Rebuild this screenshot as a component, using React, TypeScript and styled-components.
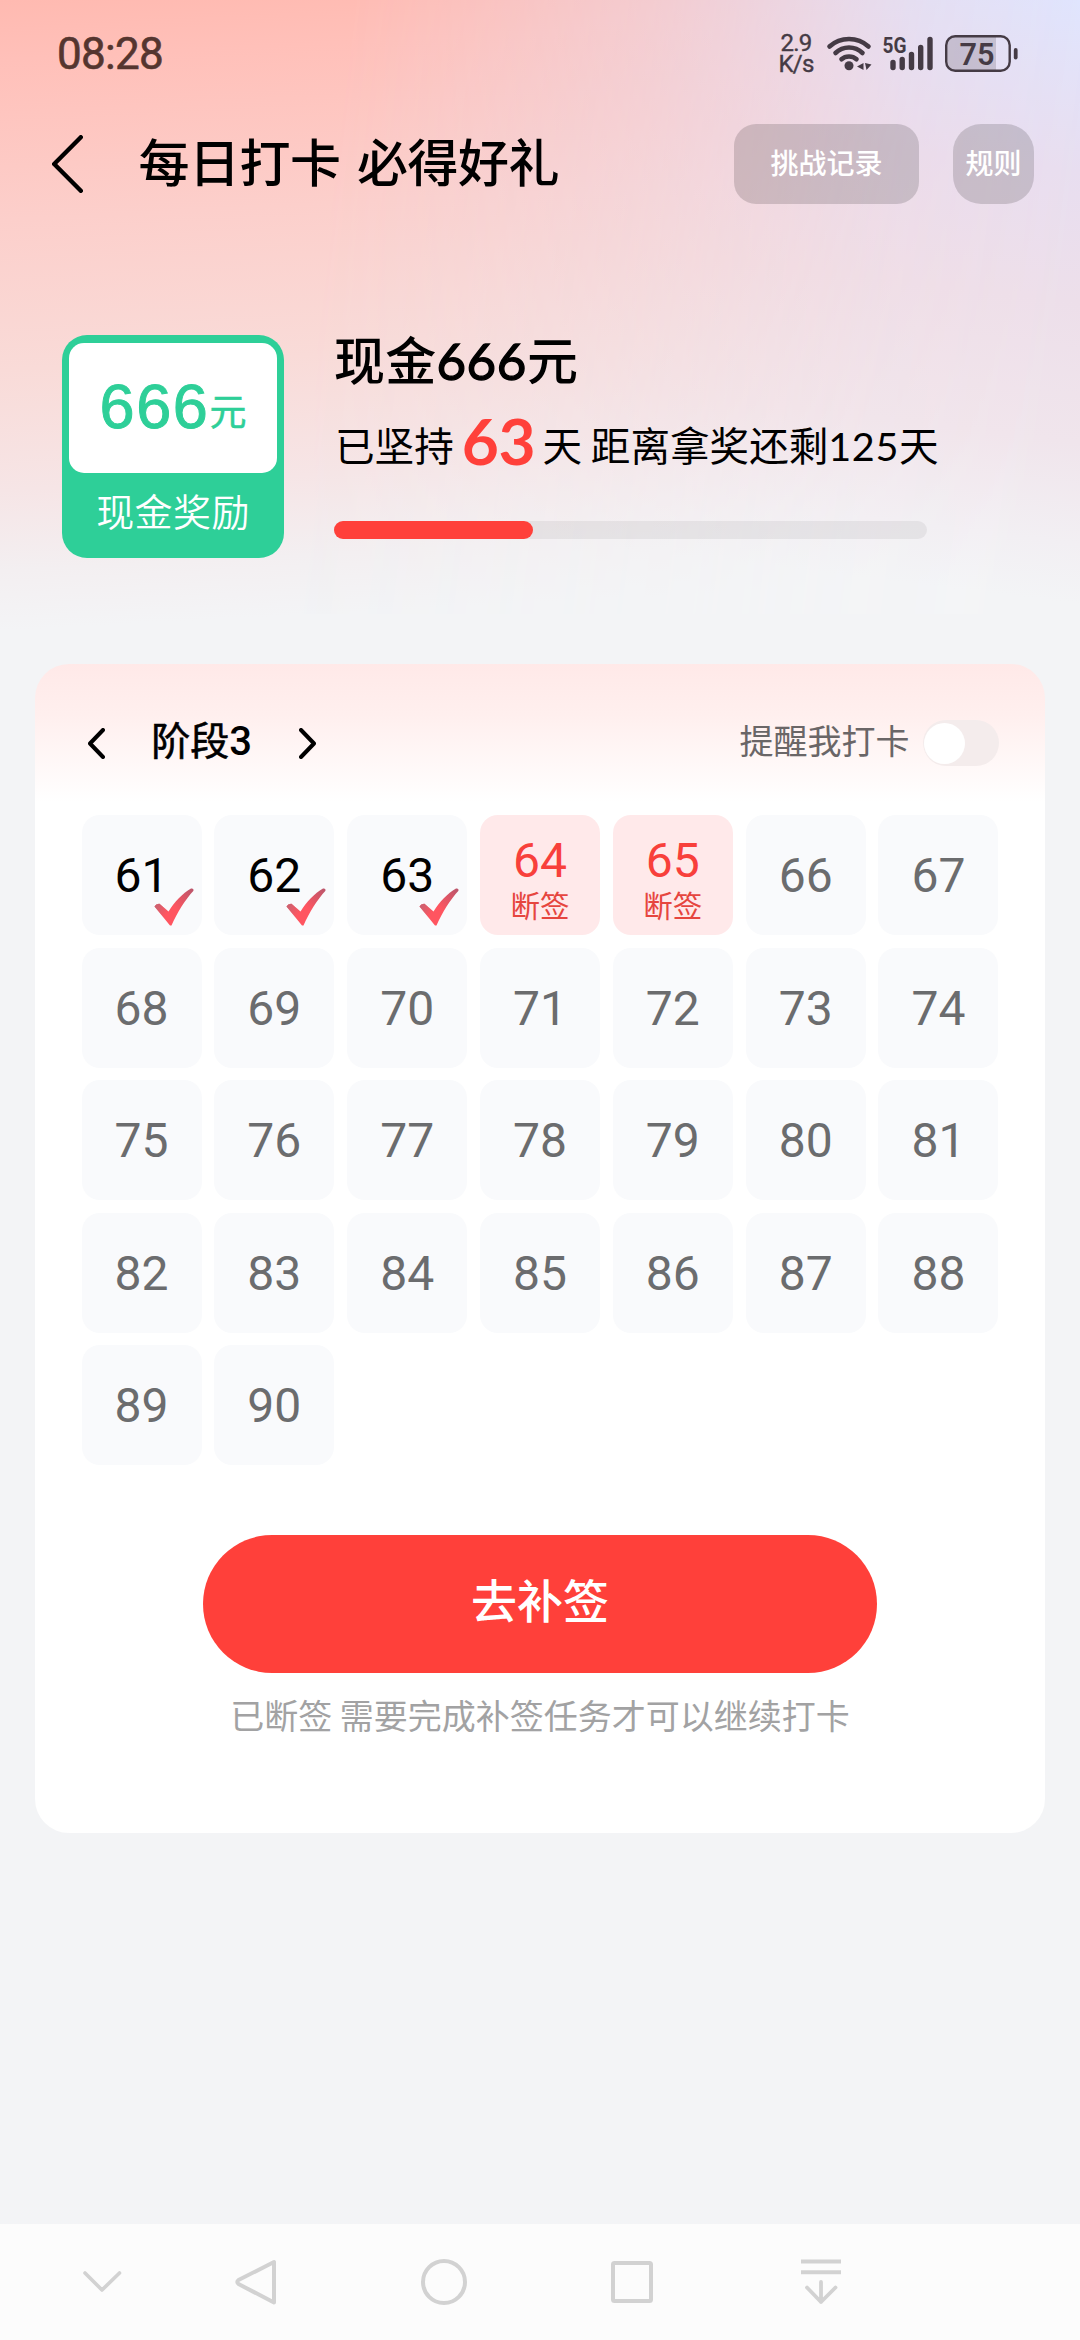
import React from "react";
import styled, { createGlobalStyle, css } from "styled-components";

const cjk = `"Noto Sans CJK SC", sans-serif`;
const red = "#ff403a";

const GlobalStyle = createGlobalStyle`
  * { box-sizing: border-box; }
  body { margin: 0; background: #f3f4f6; font-family: ${cjk}; color: #000; }
  button { border: 0; padding: 0; margin: 0; background: none; font-family: inherit; color: inherit; }
  svg { display: block; flex: none; }
`;

const Screen = styled.div`
  width: 1080px;
  height: 2340px;
  display: flex;
  flex-direction: column;
  background: #f3f4f6;
  overflow: hidden;
`;

const Hero = styled.header`
  position: relative;
  isolation: isolate;
  height: 664px;
  flex: none;
  display: flex;
  flex-direction: column;
  background: linear-gradient(177deg, #ffbab1 0, #ffc0b9 60px, #fccfcb 220px, #f9dbd8 370px, #f6e5e6 490px, #f3eff1 570px, #f3f4f6 630px);
  &::before {
    content: "";
    position: absolute;
    inset: 0 0 50px;
    z-index: -1;
    background: linear-gradient(187deg, #dfe5ff 0, #e8def0 170px, #eddfea 300px, #f0e5ec 440px, #f2eff3 540px, #f3f4f6 600px);
    mask-image: linear-gradient(97deg, transparent 30%, rgba(0, 0, 0, 0.4) 57%, rgba(0, 0, 0, 0.85) 80%, #000 96%);
  }
`;

const StatusBar = styled.div`
  height: 108px;
  flex: none;
  display: flex;
  align-items: center;
  padding: 0 62px 0 57px;
`;

const Clock = styled.span`
  flex: 1;
  font: 400 44px/52px Roboto, sans-serif;
  letter-spacing: -0.7px;
  color: #55352f;
  -webkit-text-stroke: 0.6px #55352f;
`;

const NetSpeed = styled.span`
  width: 36px;
  margin-right: 12px;
  text-align: center;
  font: 400 24px/21px Roboto, sans-serif;
  letter-spacing: -0.8px;
  color: #453b45;
  -webkit-text-stroke: 0.4px #453b45;
  white-space: pre-line;
`;

const NavRow = styled.div`
  height: 112px;
  flex: none;
  display: flex;
  align-items: center;
  padding: 0 46px 0 51.5px;
`;

const IconButton = styled.button`
  display: flex;
`;

const PageTitle = styled.h1`
  flex: 1;
  margin: -9px 0 0 56px;
  font-size: 51px;
  font-weight: 500;
  line-height: 60px;
  letter-spacing: -0.5px;
  word-spacing: 5.5px;
  white-space: nowrap;
`;

const Pill = styled.button<{ $w: number; $r: string }>`
  width: ${(p) => p.$w}px;
  height: 80px;
  border-radius: ${(p) => p.$r};
  background: rgba(0, 0, 0, 0.15);
  color: #fff;
  font-size: 28px;
  font-weight: 500;
  line-height: 76px;
  padding-bottom: 4px;
  & + & { margin-left: 34px; }
`;

const Summary = styled.section`
  display: flex;
  padding: 114.5px 0 0 62px;
`;

const Voucher = styled.div`
  width: 222px;
  height: 223px;
  border-radius: 25px;
  background: #2ecf98;
  padding: 8px 7px 0;
  text-align: center;
`;

const VoucherFace = styled.div`
  height: 130px;
  border-radius: 15px;
  background: #fff;
  color: #2ecf98;
  display: flex;
  justify-content: center;
  align-items: baseline;
  font: 400 63px/127px "Liberation Sans", sans-serif;
  letter-spacing: 1.7px;
  -webkit-text-stroke: 1px currentColor;
`;

const Unit = styled.span`
  font: 400 37px/60px ${cjk};
  letter-spacing: 0;
  -webkit-text-stroke: 0.5px currentColor;
  transform: translateY(-2px);
`;

const VoucherLabel = styled.div`
  color: #fff;
  font-size: 38px;
  font-weight: 350;
  line-height: 73px;
  letter-spacing: 0.4px;
`;

const Details = styled.div`
  margin-left: 50px;
  width: 640px;
`;

const PrizeName = styled.div`
  height: 60px;
  margin-top: -7px;
  font: 500 51px/60px ${cjk};
  letter-spacing: 0.2px;
  white-space: nowrap;
`;

const Num = styled.span<{ $stroke?: number }>`
  font-family: Lato, sans-serif;
  font-weight: 400;
  letter-spacing: 0.6px;
  -webkit-text-stroke: ${(p) => p.$stroke ?? 0}px currentColor;
`;

const Streak = styled.div`
  display: flex;
  align-items: baseline;
  height: 80px;
  margin-top: 9px;
  padding-left: 1px;
  font-size: 39.6px;
  line-height: 80px;
  white-space: pre;
`;

const StreakDays = styled.span`
  font: 700 64px/80px Lato, sans-serif;
  color: ${red};
  margin: 0 7px 0 8px;
  letter-spacing: -0.3px;
  transform: translateY(4px);
`;

const Track = styled.div`
  width: 593px;
  height: 18px;
  margin-top: 44.5px;
  border-radius: 9px;
  background: rgba(0, 0, 0, 0.055);
`;

const Bar = styled.div`
  height: 18px;
  border-radius: 9px;
  background: ${red};
`;

const Card = styled.main`
  width: 1010px;
  height: 1169px;
  flex: none;
  margin: 0 auto;
  border-radius: 34px;
  background: linear-gradient(#ffe9e8 0, #ffefee 50px, #fff 138px);
  padding: 0 46.5px;
  display: flex;
  flex-direction: column;
  align-items: center;
`;

const CardHead = styled.div`
  align-self: stretch;
  height: 151px;
  display: flex;
  align-items: center;
  padding: 7px 0 0 6px;
`;

const Stage = styled.span`
  width: 194px;
  text-align: center;
  font-size: 39px;
  font-weight: 400;
  line-height: 50px;
  margin-top: -7px;
  -webkit-text-stroke: 0.6px currentColor;
`;

const StageNumber = styled.span`
  font-family: Roboto, sans-serif;
  font-weight: 500;
  font-size: 40px;
  -webkit-text-stroke: 0;
`;

const Remind = styled.label`
  margin-left: auto;
  display: flex;
  align-items: center;
  gap: 13px;
  font-size: 34px;
  line-height: 42px;
  color: #6a6667;
  & > span { margin-top: -7px; }
`;

const Switch = styled.button`
  width: 76px;
  height: 46px;
  border-radius: 23px;
  padding: 2px 1px;
  background: #f4ecec;
  &::before {
    content: "";
    display: block;
    width: 41px;
    height: 41px;
    border-radius: 50%;
    background: #fff;
  }
`;

const Grid = styled.div`
  align-self: stretch;
  display: grid;
  grid-template-columns: repeat(7, 120px);
  grid-auto-rows: 120px;
  justify-content: space-between;
  row-gap: 12.6px;
`;

type State = "done" | "missed" | "todo";

const Cell = styled.div<{ $state: State }>`
  position: relative;
  border-radius: 18px;
  display: flex;
  flex-direction: column;
  align-items: center;
  padding-top: 37px;
  background: #f9fafc;
  color: #6b6c6e;
  font: 400 48px/48px Roboto, sans-serif;
  ${(p) => p.$state === "done" && css`color: #000;`}
  ${(p) => p.$state === "missed" && css`
    background: #ffe9ea;
    color: #f8403b;
    padding-top: 22px;
  `}
`;

const MissedTag = styled.span`
  font: 400 29.5px/34px ${cjk};
  color: #e6463f;
  margin-top: 2px;
`;

const Tick = styled.svg`
  position: absolute;
  left: 72px;
  top: 73px;
`;

const Primary = styled.button`
  width: 674px;
  height: 138px;
  margin-top: 69.6px;
  flex: none;
  border-radius: 69px;
  background: ${red};
  color: #fff;
  font-size: 46px;
  font-weight: 500;
  line-height: 126px;
  padding-bottom: 12px;
`;

const Hint = styled.p`
  margin: 20px 0 0;
  font-size: 34px;
  line-height: 44px;
  color: #a2a2a3;
  white-space: nowrap;
`;

const SystemNav = styled.nav`
  height: 116px;
  margin-top: auto;
  background: #fcfcfc;
  display: flex;
  align-items: center;
  padding-left: 78px;
`;

const NavKey = styled.button<{ $gap: number }>`
  display: flex;
  margin-right: ${(p) => p.$gap}px;
`;

const Chevron = ({ w, h, s, flip }: { w: number; h: number; s: number; flip?: boolean }) => (
  <svg width={w} height={h} viewBox={`0 0 ${w} ${h}`} fill="none" stroke="#000" strokeWidth={s} strokeLinecap="round" strokeLinejoin="round">
    <path d={flip ? `M${s / 2} ${s / 2}L${w - s / 2} ${h / 2}L${s / 2} ${h - s / 2}` : `M${w - s / 2} ${s / 2}L${s / 2} ${h / 2}L${w - s / 2} ${h - s / 2}`} />
  </svg>
);

const ink = "#453b45";

const StatusIcons = () => (
  <svg width="192" height="56" viewBox="826 26 192 56">
    <g fill="none" stroke={ink} strokeLinecap="round" strokeWidth="4.6">
      <path d="M829.5 46.5C840.500 36.500 857.500 36.500 868.500 46.500" />
      <path d="M835.500 53C843 45.700 855 45.700 862.500 53" />
      <path d="M841.500 59.200C845.500 55.500 852.500 55.500 856.500 59.200" />
    </g>
    <circle cx="849" cy="65.800" r="4.500" fill={ink} />
    <path d="M857 66.500L863.500 63V70ZM865 63L871.500 64.500L866.500 70Z" fill={ink} />
    <text x="882.500" y="53" fontFamily="Roboto, sans-serif" fontSize="22.500" fontWeight="700" fill={ink} textLength="24" lengthAdjust="spacingAndGlyphs">5G</text>
    <g stroke={ink} strokeWidth="5.400" strokeLinecap="round">
      <path d="M893 62.500V67.500M902.200 59.500V67.500M911.500 54.500V67.500M920.700 47.500V67.500M930 39.500V67.500" />
    </g>
    <path d="M955 36.500H996V71H955Q947 71 947 63V44.500Q947 36.500 955 36.500Z" fill={ink} opacity="0.2" />
    <rect x="946.200" y="36.200" width="63.500" height="34.600" rx="9" fill="none" stroke={ink} strokeWidth="2.400" />
    <rect x="1013.800" y="48" width="3.800" height="11.500" rx="1.900" fill={ink} />
    <text x="959.500" y="65" fontFamily="Roboto, sans-serif" fontSize="32" fontWeight="600" fill={ink} textLength="35" lengthAdjust="spacingAndGlyphs">75</text>
  </svg>
);

const days = Array.from({ length: 30 }, (_, i) => i + 61);
const stateOf = (d: number): State => (d <= 63 ? "done" : d <= 65 ? "missed" : "todo");

const kept = 63;
const left = 125;

export default function App() {
  return (
    <>
      <GlobalStyle />
      <Screen>
        <Hero>
          <StatusBar>
            <Clock>08:28</Clock>
            <NetSpeed>{"2.9\nK/s"}</NetSpeed>
            <StatusIcons />
          </StatusBar>
          <NavRow>
            <IconButton aria-label="返回"><Chevron w={31} h={58} s={4.4} /></IconButton>
            <PageTitle>每日打卡 必得好礼</PageTitle>
            <Pill $w={185} $r="22px">挑战记录</Pill>
            <Pill $w={81} $r="28px">规则</Pill>
          </NavRow>
          <Summary>
            <Voucher>
              <VoucherFace>666<Unit>元</Unit></VoucherFace>
              <VoucherLabel>现金奖励</VoucherLabel>
            </Voucher>
            <Details>
              <PrizeName>现金<Num $stroke={1.3}>666</Num>元</PrizeName>
              <Streak>
                <span>已坚持</span>
                <StreakDays>{kept}</StreakDays>
                <span>天 距离拿奖还剩<Num>{left}</Num>天</span>
              </Streak>
              <Track><Bar style={{ width: `${(kept / (kept + left)) * 100}%` }} /></Track>
            </Details>
          </Summary>
        </Hero>
        <Card>
          <CardHead>
            <IconButton aria-label="上一阶段"><Chevron w={17} h={31} s={4} /></IconButton>
            <Stage>阶段<StageNumber>3</StageNumber></Stage>
            <IconButton aria-label="下一阶段"><Chevron w={17} h={31} s={4} flip /></IconButton>
            <Remind>
              <span>提醒我打卡</span>
              <Switch role="switch" aria-checked="false" />
            </Remind>
          </CardHead>
          <Grid>
            {days.map((d) => {
              const state = stateOf(d);
              return (
                <Cell key={d} $state={state}>
                  {d}
                  {state === "missed" && <MissedTag>断签</MissedTag>}
                  {state === "done" && (
                    <Tick width="41" height="38" viewBox="0 0 41 38">
                      <defs>
                        <linearGradient id={`tick${d}`} x1="0" y1="1" x2="1" y2="0">
                          <stop offset="0.5" stopColor="#ff5560" />
                          <stop offset="1" stopColor="#b8566c" />
                        </linearGradient>
                        <linearGradient id={`tip${d}`} x1="0" y1="0.4" x2="0.35" y2="0.6">
                          <stop offset="0" stopColor="#c06474" />
                          <stop offset="1" stopColor="#c06474" stopOpacity="0" />
                        </linearGradient>
                      </defs>
                      {[`url(#tick${d})`, `url(#tip${d})`].map((fill) => (
                        <path key={fill} fill={fill} d="M0.500 18.500Q2 15.500 5.500 15.800L14.500 23.500C20.500 14 28.500 5.500 37 0.500Q40 0 39.500 2.800C31 12 23.500 24 17.500 37.500L16 37.500Z" />
                      ))}
                    </Tick>
                  )}
                </Cell>
              );
            })}
          </Grid>
          <Primary>去补签</Primary>
          <Hint>已断签 需要完成补签任务才可以继续打卡</Hint>
        </Card>
        <SystemNav>
          <NavKey $gap={106} aria-label="收起">
            <svg width="48" height="50" viewBox="78 2257 48 50" fill="none" stroke="#d2d2d2" strokeWidth="3.600" strokeLinecap="round" strokeLinejoin="round"><path d="M85 2273L102 2290L119.500 2273" /></svg>
          </NavKey>
          <NavKey $gap={140} aria-label="返回">
            <svg width="48" height="50" viewBox="232 2257 48 50" fill="none" stroke="#d2d2d2" strokeWidth="4" strokeLinejoin="round"><path d="M274 2262V2302.500L238.500 2284Q236 2282 238.500 2280Z" /></svg>
          </NavKey>
          <NavKey $gap={140} aria-label="主页">
            <svg width="48" height="50" viewBox="420 2257 48 50" fill="none" stroke="#d2d2d2" strokeWidth="4"><circle cx="444" cy="2282" r="21" /></svg>
          </NavKey>
          <NavKey $gap={141} aria-label="最近任务">
            <svg width="48" height="50" viewBox="608 2257 48 50" fill="none" stroke="#d2d2d2" strokeWidth="4"><rect x="613" y="2263" width="38" height="38" rx="1.500" /></svg>
          </NavKey>
          <NavKey $gap={0} aria-label="下拉通知">
            <svg width="48" height="50" viewBox="797 2257 48 50" fill="none" stroke="#d2d2d2" strokeWidth="4" strokeLinejoin="round"><path d="M801 2261.500H841M801 2272.300H841" /><path d="M821 2282V2302M807 2287.500L821 2302L835.500 2287.500" strokeLinecap="round" strokeWidth="3.800" /></svg>
          </NavKey>
        </SystemNav>
      </Screen>
    </>
  );
}
